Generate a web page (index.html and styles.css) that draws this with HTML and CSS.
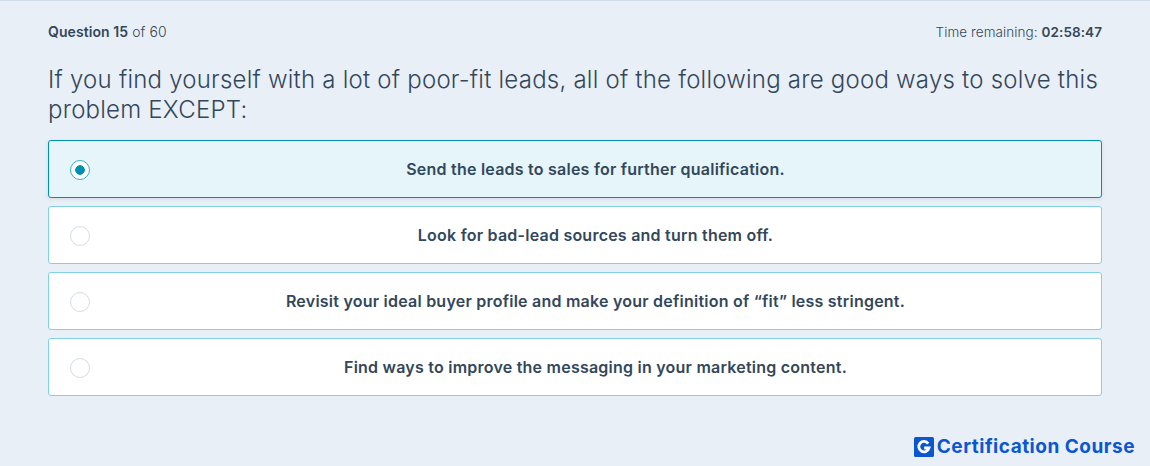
FILE: index.html
```html
<!DOCTYPE html>
<html lang="en">
<head>
<meta charset="utf-8">
<title>Question 15 of 60</title>
<link rel="stylesheet" href="styles.css">
</head>
<body>
<main class="page">
  <header class="status">
    <div class="count"><strong>Question 15</strong> of 60</div>
    <div class="timer">Time remaining: <strong>02:58:47</strong></div>
  </header>
  <h1 class="question">If you find yourself with a lot of poor-fit leads, all of the following are good ways to solve this problem EXCEPT:</h1>
  <div class="options">
    <div class="option selected"><span class="radio"></span><span class="label">Send the leads to sales for further qualification.</span></div>
    <div class="option"><span class="radio"></span><span class="label">Look for bad-lead sources and turn them off.</span></div>
    <div class="option"><span class="radio"></span><span class="label">Revisit your ideal buyer profile and make your definition of “fit” less stringent.</span></div>
    <div class="option"><span class="radio"></span><span class="label">Find ways to improve the messaging in your marketing content.</span></div>
  </div>
</main>
<div class="brand">
  <svg class="brand-icon" viewBox="0 0 20 20" aria-hidden="true"><rect width="20" height="20" rx="1.5" fill="#0b57d0"/><path d="M14.2 6.6A5.2 5.2 0 1 0 15 11H10.2" fill="none" stroke="#fff" stroke-width="2.8"/></svg>
  <span>Certification Course</span>
</div>
</body>
</html>
```
FILE: styles.css
```css
* { box-sizing: border-box; }
html, body { margin: 0; height: 100%; }
body {
  position: relative;
  background: #e9eff7;
  border-top: 1px solid #cfdcea;
  color: #33475b;
  font-family: "Inter", "Liberation Sans", sans-serif;
  overflow: hidden;
}
.page { padding: 22px 48px 0; }
.status {
  display: flex;
  justify-content: space-between;
  font-size: 14px;
  line-height: 18px;
  height: 18px;
  font-weight: 300;
}
.count { letter-spacing: 0.08px; }
.timer { font-size: 13.5px; letter-spacing: 0.08px; }
.status strong { font-weight: 600; }
.question {
  margin: 24px 0 15px;
  font-size: 24px;
  line-height: 30px;
  font-weight: 300;
  letter-spacing: 0.225px;
}
.options { display: flex; flex-direction: column; gap: 8px; }
.option {
  display: flex;
  align-items: center;
  height: 58px;
  padding: 0 0 0 21px;
  background: #fff;
  border: 1px solid #7fd1e3;
  border-radius: 3px;
}
.option.selected {
  background: #e5f5fa;
  border-color: #0091ae;
  box-shadow: 0 1px 4px rgba(45, 62, 80, 0.12);
}
.radio {
  flex: none;
  width: 20px;
  height: 20px;
  margin-top: 2px;
  border: 1px solid #d5dde6;
  border-radius: 50%;
  background: #fff;
}
.selected .radio {
  border: 1px solid #3fb0c6;
  background: radial-gradient(circle, #0091ae 0 4.5px, #fff 5px);
}
.label {
  flex: 1;
  text-align: center;
  font-size: 16px;
  line-height: 20px;
  font-weight: 600;
  letter-spacing: 0.23px;
}
.brand {
  position: absolute;
  right: 15px;
  bottom: 9px;
  display: flex;
  align-items: center;
  gap: 3px;
  color: #0b57d0;
  font-size: 19px;
  line-height: 20px;
  font-weight: 700;
  letter-spacing: 0.5px;
}
.brand-icon { width: 20px; height: 20px; display: block; }
```
